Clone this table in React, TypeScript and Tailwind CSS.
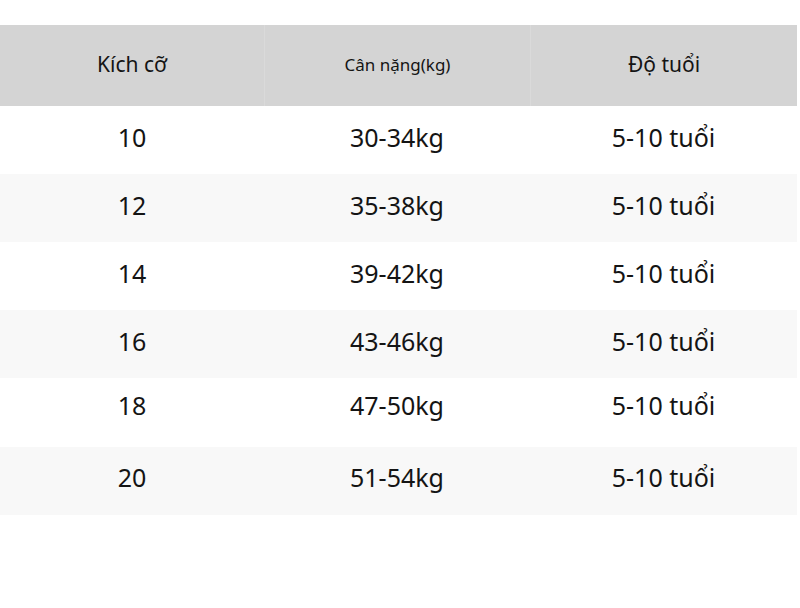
import React from "react";

const rows = [
  { size: "10", w: "30-34kg", bg: "bg-white", h: "h-[68px]", pad: "pb-[5px]" },
  { size: "12", w: "35-38kg", bg: "bg-[#f8f8f8]", h: "h-[68px]", pad: "pb-[5px]" },
  { size: "14", w: "39-42kg", bg: "bg-white", h: "h-[68px]", pad: "pb-[5px]" },
  { size: "16", w: "43-46kg", bg: "bg-[#f8f8f8]", h: "h-[68px]", pad: "pb-[5px]" },
  { size: "18", w: "47-50kg", bg: "bg-white", h: "h-[69px]", pad: "pb-[13px]" },
  { size: "20", w: "51-54kg", bg: "bg-[#f8f8f8]", h: "h-[68px]", pad: "pb-[6px]" },
];

export default function App() {
  return (
    <div
      className="w-[800px] h-[608px] bg-white pt-[25px] text-[#141414]"
      style={{ fontFamily: '"Noto Sans", "Open Sans", sans-serif' }}
    >
      <div className="w-[797px]">
        <div className="grid grid-cols-[264px_266px_267px] h-[81px] bg-[#d4d4d4]">
          <div className="flex items-center justify-center text-[21px] pb-[2px]">Kích cỡ</div>
          <div className="flex items-center justify-center text-[17px] border-l border-[#dadada] pb-[2px]">Cân nặng(kg)</div>
          <div className="flex items-center justify-center text-[21px] border-l border-[#dadada] pb-[2px]">Độ tuổi</div>
        </div>
        {rows.map((r) => (
          <div key={r.size} className={`grid grid-cols-[264px_266px_267px] ${r.h} ${r.bg} text-[25px]`}>
            <div className={`flex items-center justify-center ${r.pad}`}>{r.size}</div>
            <div className={`flex items-center justify-center ${r.pad}`}>{r.w}</div>
            <div className={`flex items-center justify-center ${r.pad}`}>5-10 tuổi</div>
          </div>
        ))}
      </div>
    </div>
  );
}
